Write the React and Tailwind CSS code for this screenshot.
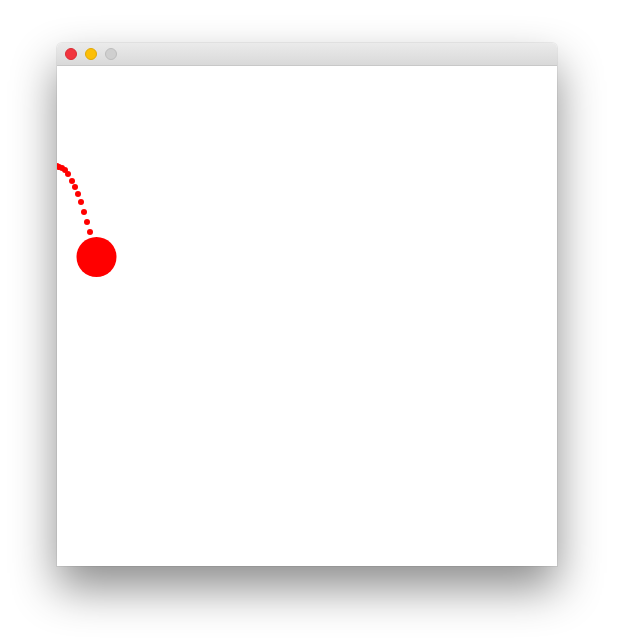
import React from 'react';

const TRAIL = [
  [57, 100], [59, 101], [62, 102], [65, 104], [68, 108], [72, 115], [75, 121],
  [78, 128], [81, 136], [84, 146], [87, 156], [90, 166],
];

export default function App() {
  return (
    <div className="w-[628px] h-[638px] bg-white pl-[57px] pt-[43px] overflow-hidden">
      <div className="w-[500px] rounded-t-[5px] bg-white shadow-[0_22px_45px_rgba(0,0,0,0.45),0_0_0_1px_rgba(0,0,0,0.06)]">
        <div className="h-[23px] flex items-center gap-[8px] pl-[8px] rounded-t-[5px] bg-gradient-to-b from-[#ebebeb] to-[#d9d9d9] border-b border-[#c8c8c8]">
          <span className="w-[12px] h-[12px] rounded-full bg-[#f2343e] border border-[#d92b33]" />
          <span className="w-[12px] h-[12px] rounded-full bg-[#fcbf07] border border-[#e0a806]" />
          <span className="w-[12px] h-[12px] rounded-full bg-[#cfcfcf] border border-[#bdbdbd]" />
        </div>
        <svg width="500" height="500" viewBox="0 0 500 500" className="block">
          {TRAIL.map(([x, y], i) => (
            <circle key={i} cx={x - 57} cy={y} r="3" fill="#ff0000" />
          ))}
          <circle cx={96.5 - 57} cy={191} r="20" fill="#ff0000" />
        </svg>
      </div>
    </div>
  );
}
